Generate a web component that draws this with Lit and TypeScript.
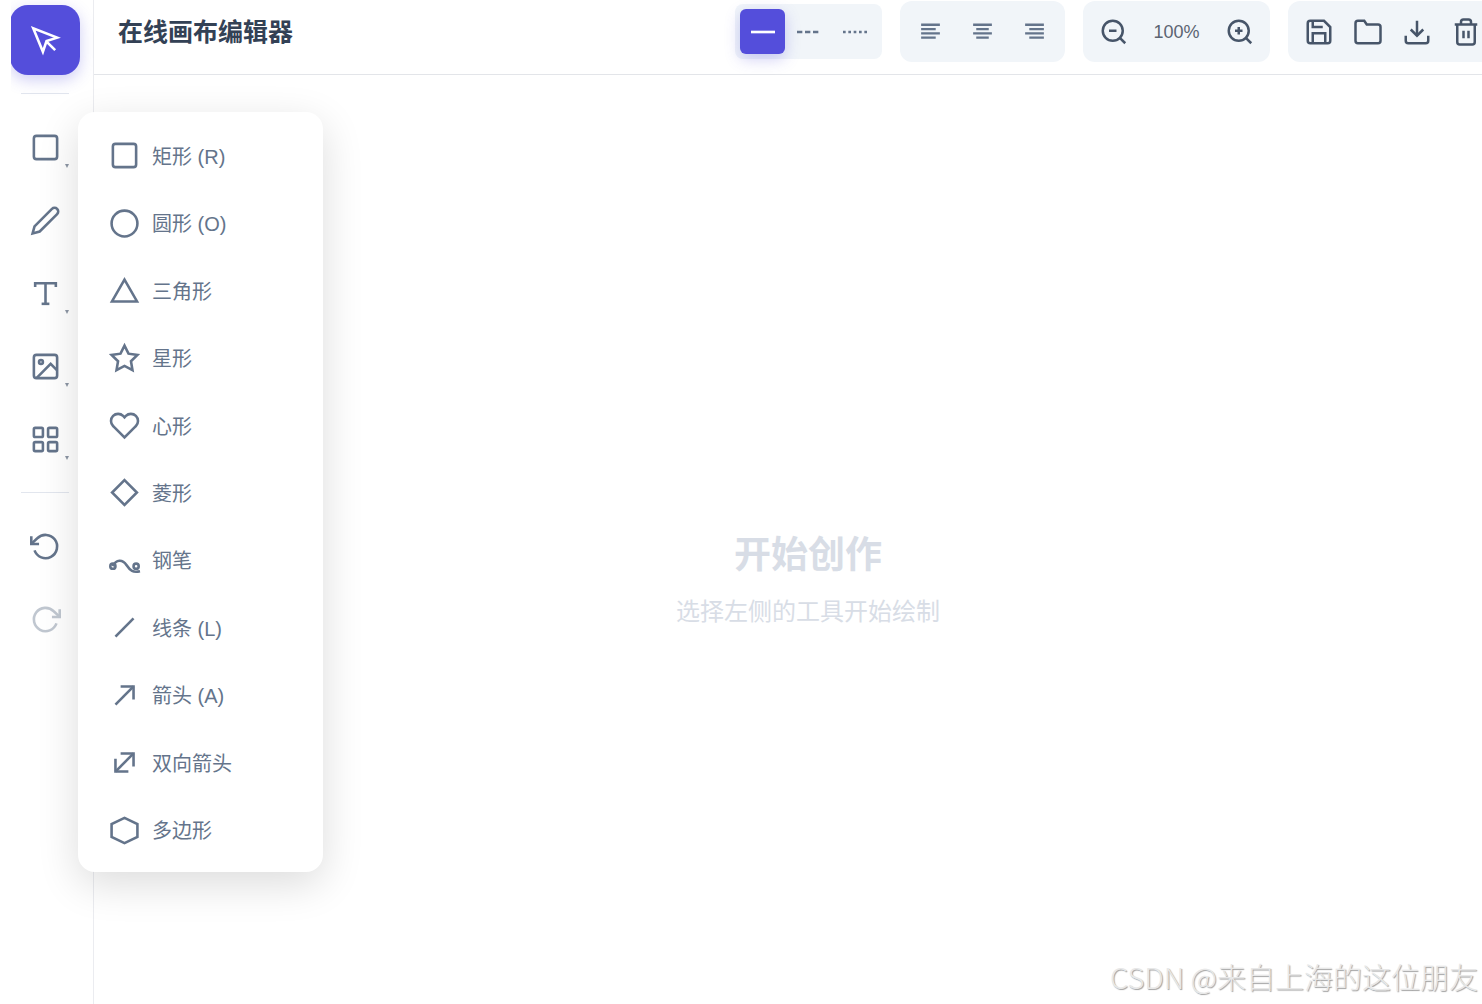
import { LitElement, html, svg, css, type SVGTemplateResult } from "lit";
import { customElement, property, state } from "lit/decorators.js";

const ICONS: Record<string, SVGTemplateResult> = {
  pointer: svg`<path d="M2.500 2.500l7.500 18.200 2.800-8.200 8.200-2.700z"/><path d="M13 13l6.500 6.500"/>`,
  rect: svg`<rect x="3" y="3" width="18" height="18" rx="2"/>`,
  pencil: svg`<path d="M17 3a2.828 2.828 0 1 1 4 4L7.5 20.5 2 22l1.5-5.5L17 3z"/>`,
  text: svg`<polyline points="4 7 4 4 20 4 20 7"/><line x1="9" y1="20" x2="15" y2="20"/><line x1="12" y1="4" x2="12" y2="20"/>`,
  image: svg`<rect x="3" y="3" width="18" height="18" rx="2"/><circle cx="8.5" cy="8.5" r="1.5"/><polyline points="21 15 16 10 5 21"/>`,
  grid: svg`<rect x="3" y="3" width="7" height="7" rx="1"/><rect x="14" y="3" width="7" height="7" rx="1"/><rect x="14" y="14" width="7" height="7" rx="1"/><rect x="3" y="14" width="7" height="7" rx="1"/>`,
  undo: svg`<polyline points="1 4 1 10 7 10"/><path d="M3.51 15a9 9 0 1 0 2.13-9.36L1 10"/>`,
  redo: svg`<polyline points="23 4 23 10 17 10"/><path d="M20.49 15a9 9 0 1 1-2.12-9.36L23 10"/>`,
  circle: svg`<circle cx="12" cy="12" r="10"/>`,
  triangle: svg`<polygon points="12 3.5 21.7 20.5 2.3 20.5"/>`,
  star: svg`<polygon points="12 2 15.09 8.26 22 9.27 17 14.14 18.18 21.02 12 17.77 5.82 21.02 7 14.14 2 9.27 8.91 8.26"/>`,
  heart: svg`<path d="M20.84 4.61a5.5 5.5 0 0 0-7.78 0L12 5.67l-1.06-1.06a5.5 5.5 0 0 0-7.78 7.78l1.06 1.06L12 21.23l7.78-7.78 1.06-1.06a5.5 5.5 0 0 0 0-7.78z"/>`,
  diamond: svg`<polygon points="12 2.4 21.6 12 12 21.6 2.4 12"/>`,
  curve: svg`<circle cx="3" cy="16.400" r="2"/><circle cx="21" cy="16.400" r="2"/><path d="M3 16.400C5.500 11 10.500 11 13.500 15.500S18.500 21.500 24 20.300"/>`,
  line: svg`<line x1="5" y1="19" x2="19" y2="5"/>`,
  arrow: svg`<line x1="5" y1="19" x2="19" y2="5"/><polyline points="9 5 19 5 19 15"/>`,
  arrows: svg`<line x1="5" y1="19" x2="19" y2="5"/><polyline points="9 5 19 5 19 15"/><polyline points="15 19 5 19 5 9"/>`,
  hexagon: svg`<polygon points="12 2.2 22 7 22 17 12 21.800 2 17 2 7"/>`,
  solid: svg`<line x1="3" y1="12" x2="21" y2="12"/>`,
  dashed: svg`<line x1="3" y1="12" x2="21" y2="12" stroke-dasharray="4 2"/>`,
  dotted: svg`<line x1="3" y1="12" x2="21" y2="12" stroke-dasharray="2 2"/>`,
  alignLeft: svg`<path d="M3 5.500h18M3 9.700h14M3 13.700h18M3 17.800h14" stroke-width="2.2"/>`,
  alignCenter: svg`<path d="M3 5.500h18M6 9.700h12M3 13.700h18M6 17.800h12" stroke-width="2.2"/>`,
  alignRight: svg`<path d="M3 5.500h18M7 9.700h14M3 13.700h18M7 17.800h14" stroke-width="2.2"/>`,
  zoomOut: svg`<circle cx="11" cy="11" r="8"/><line x1="21" y1="21" x2="16.65" y2="16.65"/><line x1="8" y1="11" x2="14" y2="11"/>`,
  zoomIn: svg`<circle cx="11" cy="11" r="8"/><line x1="21" y1="21" x2="16.65" y2="16.65"/><path d="M11 8v6M8 11h6"/>`,
  save: svg`<path d="M19 21H5a2 2 0 0 1-2-2V5a2 2 0 0 1 2-2h11l5 5v11a2 2 0 0 1-2 2z"/><polyline points="17 21 17 13 7 13 7 21"/><polyline points="7 3 7 8 15 8"/>`,
  folder: svg`<path d="M22 19a2 2 0 0 1-2 2H4a2 2 0 0 1-2-2V5a2 2 0 0 1 2-2h5l2 3h9a2 2 0 0 1 2 2z"/>`,
  download: svg`<path d="M21 15v4a2 2 0 0 1-2 2H5a2 2 0 0 1-2-2v-4"/><polyline points="7 10 12 15 17 10"/><line x1="12" y1="15" x2="12" y2="3"/>`,
  trash: svg`<polyline points="3 6 5 6 21 6"/><path d="M19 6v14a2 2 0 0 1-2 2H7a2 2 0 0 1-2-2V6m3 0V4a2 2 0 0 1 2-2h4a2 2 0 0 1 2 2v2"/><path d="M10 11v6M14 11v6"/>`,
};

@customElement("ed-icon")
class EdIcon extends LitElement {
  @property() name = "";

  static styles = css`
    :host {
      display: block;
      flex: none;
      width: var(--icon-size, 31px);
      height: var(--icon-size, 31px);
    }
    .glyph {
      display: block;
      width: 100%;
      height: 100%;
      fill: none;
      stroke: currentColor;
      stroke-width: 2;
      overflow: visible;
    }
  `;

  render() {
    return html`<svg class="glyph" viewBox="0 0 24 24" aria-hidden="true">${ICONS[this.name]}</svg>`;
  }
}

interface Tool {
  icon: string;
  label: string;
  more?: boolean;
  disabled?: boolean;
}

const TOOLS: Tool[] = [
  { icon: "rect", label: "形状", more: true },
  { icon: "pencil", label: "画笔" },
  { icon: "text", label: "文本", more: true },
  { icon: "image", label: "图片", more: true },
  { icon: "grid", label: "素材", more: true },
];

const HISTORY: Tool[] = [
  { icon: "undo", label: "撤销" },
  { icon: "redo", label: "重做", disabled: true },
];

const SHAPES: Tool[] = [
  { icon: "rect", label: "矩形 (R)" },
  { icon: "circle", label: "圆形 (O)" },
  { icon: "triangle", label: "三角形" },
  { icon: "star", label: "星形" },
  { icon: "heart", label: "心形" },
  { icon: "diamond", label: "菱形" },
  { icon: "curve", label: "钢笔" },
  { icon: "line", label: "线条 (L)" },
  { icon: "arrow", label: "箭头 (A)" },
  { icon: "arrows", label: "双向箭头" },
  { icon: "hexagon", label: "多边形" },
];

const LINE_STYLES: Tool[] = [
  { icon: "solid", label: "实线" },
  { icon: "dashed", label: "虚线" },
  { icon: "dotted", label: "点线" },
];

const ALIGNMENTS: Tool[] = [
  { icon: "alignLeft", label: "左对齐" },
  { icon: "alignCenter", label: "居中对齐" },
  { icon: "alignRight", label: "右对齐" },
];

const FILE_ACTIONS: Tool[] = [
  { icon: "save", label: "保存" },
  { icon: "folder", label: "打开" },
  { icon: "download", label: "导出" },
  { icon: "trash", label: "清空" },
];

@customElement("app-root")
class AppRoot extends LitElement {
  @state() private tool = "pointer";
  @state() private lineStyle = "solid";

  static styles = css`
    :host {
      display: block;
      position: relative;
      height: 100vh;
      overflow: hidden;
      background: #fff;
      color: #64748b;
      font-family: "Liberation Sans", "Noto Sans CJK SC", sans-serif;
    }
    button {
      display: flex;
      align-items: center;
      justify-content: center;
      margin: 0;
      padding: 0;
      border: 0;
      background: none;
      color: inherit;
      font: inherit;
      cursor: pointer;
    }
    /* The workspace runs past the right and bottom window edges. */
    .shell {
      display: flex;
      width: calc(100% + 40px);
      height: calc(100% + 80px);
    }
    .rail {
      display: flex;
      flex: none;
      flex-direction: column;
      align-items: center;
      gap: 18px;
      box-sizing: border-box;
      width: 94px;
      padding: 5px 13px 0 10px;
      border-right: 1px solid #ebecf0;
      clip-path: inset(0 0 0 11px);
    }
    .rail-group {
      display: flex;
      flex-direction: column;
      gap: 3px;
    }
    .tool {
      position: relative;
      width: 70px;
      height: 70px;
      border-radius: 18px;
    }
    .tool.active {
      background: #544edb;
      color: #fff;
      box-shadow: 0 5px 15px rgba(84, 78, 219, 0.28);
    }
    .tool:disabled {
      opacity: 0.4;
      cursor: default;
    }
    .more {
      position: absolute;
      right: 11px;
      bottom: 14px;
      width: 4px;
      height: 4px;
      background: #8d96a5;
      clip-path: polygon(0 0, 100% 0, 50% 100%);
    }
    .rule {
      width: 48px;
      height: 1px;
      margin: 0;
      border: 0;
      background: #e2e6ee;
    }
    .work {
      display: flex;
      flex: 1;
      flex-direction: column;
      min-width: 0;
    }
    .bar {
      display: flex;
      align-items: center;
      justify-content: space-between;
      box-sizing: border-box;
      min-height: 75px;
      padding: 1px 26px 12px 24px;
      border-bottom: 1px solid #e3e5e9;
    }
    .title {
      margin: 0;
      color: #334155;
      font-size: 25px;
      line-height: 36px;
      font-weight: 700;
      white-space: nowrap;
    }
    .groups {
      display: flex;
      align-items: center;
      gap: 18px;
    }
    .group {
      display: flex;
      align-items: center;
      padding: 5px;
      border-radius: 12px;
      background: #f1f5f9;
      --icon-size: 30px;
    }
    .group.lines {
      gap: 1px;
      border-radius: 8px;
      --icon-size: 32px;
    }
    .group.lines button {
      width: 45px;
      height: 45px;
      border-radius: 6px;
    }
    .group.lines .active {
      background: #544edb;
      color: #fff;
      box-shadow: 0 5px 15px rgba(84, 78, 219, 0.28);
    }
    .group.align {
      gap: 1px;
      --icon-size: 25px;
    }
    .cell {
      width: 51px;
      height: 51px;
    }
    .group.zoom,
    .group.files {
      color: #475569;
    }
    .group.files {
      padding: 5px 6px;
    }
    .group.files .cell {
      width: 49px;
    }
    .level {
      min-width: 75px;
      font-size: 18px;
      line-height: 24px;
      text-align: center;
      color: #5b6472;
    }
    .canvas {
      display: flex;
      flex: 1;
      flex-direction: column;
      align-items: center;
      justify-content: center;
      gap: 11px;
      color: #d8dde6;
    }
    .empty-title {
      margin: 0;
      font-size: 37px;
      line-height: 54px;
      font-weight: 700;
    }
    .empty-hint {
      margin: 0;
      font-size: 24px;
      line-height: 36px;
    }
    .menu {
      position: absolute;
      top: 112px;
      left: 78px;
      display: grid;
      grid-auto-rows: 1fr;
      box-sizing: border-box;
      width: 245px;
      height: 760px;
      margin: 0;
      padding: 10px 10px 8px;
      border-radius: 17px;
      background: #fff;
      box-shadow: 0 12px 42px rgba(0, 0, 0, 0.14);
      list-style: none;
    }
    .entry {
      display: grid;
    }
    .entry button {
      justify-content: flex-start;
      gap: 12px;
      padding: 0 21px;
      font-size: 20px;
      line-height: 28px;
    }
    .name {
      padding-top: 2px;
    }
    .mark {
      position: absolute;
      right: 4px;
      bottom: 7px;
      margin: 0;
      color: #e8e8e8;
      font-family: "Noto Sans CJK SC", sans-serif;
      font-size: 29px;
      line-height: 42px;
      font-weight: 300;
      text-shadow: 1px 1px 1px #a0a0a0;
    }
  `;

  private renderTool(t: Tool) {
    return html`<button
      class="tool ${this.tool === t.icon ? "active" : ""}"
      type="button"
      aria-label=${t.label}
      ?disabled=${t.disabled}
      @click=${() => (this.tool = t.icon)}
    >
      <ed-icon name=${t.icon}></ed-icon>
      ${t.more ? html`<span class="more"></span>` : ""}
    </button>`;
  }

  private renderCell(t: Tool) {
    return html`<button class="cell" type="button" aria-label=${t.label}>
      <ed-icon name=${t.icon}></ed-icon>
    </button>`;
  }

  render() {
    return html`
      <div class="shell">
        <nav class="rail">
          ${this.renderTool({ icon: "pointer", label: "选择" })}
          <hr class="rule" />
          <div class="rail-group">${TOOLS.map((t) => this.renderTool(t))}</div>
          <hr class="rule" />
          <div class="rail-group">${HISTORY.map((t) => this.renderTool(t))}</div>
        </nav>
        <div class="work">
          <header class="bar">
            <h1 class="title">在线画布编辑器</h1>
            <div class="groups">
              <div class="group lines">
                ${LINE_STYLES.map(
                  (t) => html`<button
                    class=${this.lineStyle === t.icon ? "active" : ""}
                    type="button"
                    aria-label=${t.label}
                    @click=${() => (this.lineStyle = t.icon)}
                  >
                    <ed-icon name=${t.icon}></ed-icon>
                  </button>`,
                )}
              </div>
              <div class="group align">${ALIGNMENTS.map((t) => this.renderCell(t))}</div>
              <div class="group zoom">
                ${this.renderCell({ icon: "zoomOut", label: "缩小" })}
                <span class="level">100%</span>
                ${this.renderCell({ icon: "zoomIn", label: "放大" })}
              </div>
              <div class="group files">${FILE_ACTIONS.map((t) => this.renderCell(t))}</div>
            </div>
          </header>
          <main class="canvas">
            <h2 class="empty-title">开始创作</h2>
            <p class="empty-hint">选择左侧的工具开始绘制</p>
          </main>
        </div>
      </div>
      <ul class="menu">
        ${SHAPES.map(
          (s) => html`<li class="entry">
            <button type="button">
              <ed-icon name=${s.icon}></ed-icon><span class="name">${s.label}</span>
            </button>
          </li>`,
        )}
      </ul>
      <p class="mark">CSDN @来自上海的这位朋友</p>
    `;
  }
}
